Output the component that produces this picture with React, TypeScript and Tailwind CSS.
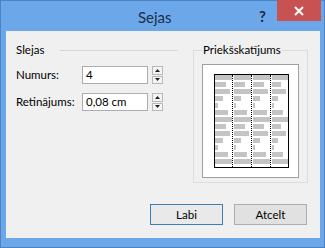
const cols = [
  [17, 11, 15, 8, 3, 13, 17, 11, 15, 8, 3, 13, 17],
  [17, 11, 17, 7, 2, 13, 17, 11, 15, 7, 2, 13, 17],
  [17, 11, 15, 7, 2, 14, 17, 11, 15, 7, 2, 13, 17],
  [16, 9, 14, 6, 2, 11, 16, 9, 14, 6, 2, 11, 16],
];

const Spinner = () => (
  <div className="ml-[4px] flex flex-col gap-px">
    <div className="w-[11px] h-[8.5px] border border-[#b9b9b9] bg-[#f4f4f4] flex items-center justify-center">
      <svg width="5" height="3" viewBox="0 0 5 3">
        <path d="M0 3 L2.5 0 L5 3 Z" fill="#222" />
      </svg>
    </div>
    <div className="w-[11px] h-[8.5px] border border-[#b9b9b9] bg-[#f4f4f4] flex items-center justify-center">
      <svg width="5" height="3" viewBox="0 0 5 3">
        <path d="M0 0 L2.5 3 L5 0 Z" fill="#222" />
      </svg>
    </div>
  </div>
);

const Field = ({ label, value }: { label: string; value: string }) => (
  <div className="flex items-center">
    <span className="w-[66px]">{label}</span>
    <div className="w-[66px] h-[18px] border border-[#abadb3] bg-white pl-[3px] flex items-center">
      {value}
    </div>
    <Spinner />
  </div>
);

export default function App() {
  return (
    <div className="w-[325px] h-[248px] bg-[#6ca7ea] border border-[#4b84c6] flex flex-col font-['Lato',sans-serif] text-[11.5px] text-black">
      <div className="h-[30px] flex items-start">
        <span className="ml-[137px] mt-[6px] text-[15px] leading-[20px] text-[#1c2e46]">Sejas</span>
        <span className="ml-auto mt-[6px] mr-[11px] text-[15px] leading-[18px] font-bold text-[#1c2a3c]">?</span>
        <div className="w-[44px] h-[21px] mr-[3px] -mt-px bg-[#c85151] flex items-center justify-center">
          <svg width="10" height="10" viewBox="0 0 10 10">
            <path d="M1 1 L9 9 M9 1 L1 9" stroke="#fff" strokeWidth="2" />
          </svg>
        </div>
      </div>
      <div className="ml-[5px] w-[314px] h-[207px] bg-[#f0f0f0] flex flex-col">
        <div className="flex pl-[10px] pt-[11px]">
          <div className="w-[162px] flex flex-col">
            <div className="h-[16px] flex items-center">
              <span>Slejas</span>
              <div className="flex-1 ml-[16px] h-px bg-[#d5d5d5]" />
            </div>
            <div className="mt-[8px]">
              <Field label="Numurs:" value="4" />
            </div>
            <div className="mt-[9px]">
              <Field label="Retinājums:" value="0,08 cm" />
            </div>
          </div>
          <fieldset className="ml-[15px] w-[115px] h-[141px] border border-[#dcdcdc] pl-[8px]">
            <legend className="px-[1px] leading-[16px]">Priekšskatījums</legend>
            <div className="mt-[6px] w-[97px] h-[114px] border border-[#a0a0a0] bg-white pl-[11px] pt-[9px]">
              <div className="w-[75px] h-[94px] border border-black flex">
                {cols.map((c, i) => (
                  <div
                    key={i}
                    className={`flex-1 flex flex-col gap-[2px] ${i > 0 ? "border-l border-dotted border-black pl-[1px]" : ""}`}
                  >
                    {c.map((w, j) => (
                      <div key={j} className="h-[5px] bg-[#c4c4c4]" style={{ width: w }} />
                    ))}
                  </div>
                ))}
              </div>
            </div>
          </fieldset>
        </div>
        <div className="mt-auto mb-[13px] mr-[13px] flex justify-end gap-[11px]">
          <button className="w-[73px] h-[21px] border border-[#3c7fb1] bg-[#e9e9e9]">Labi</button>
          <button className="w-[73px] h-[21px] border border-[#adadad] bg-[#e1e1e1]">Atcelt</button>
        </div>
      </div>
    </div>
  );
}
